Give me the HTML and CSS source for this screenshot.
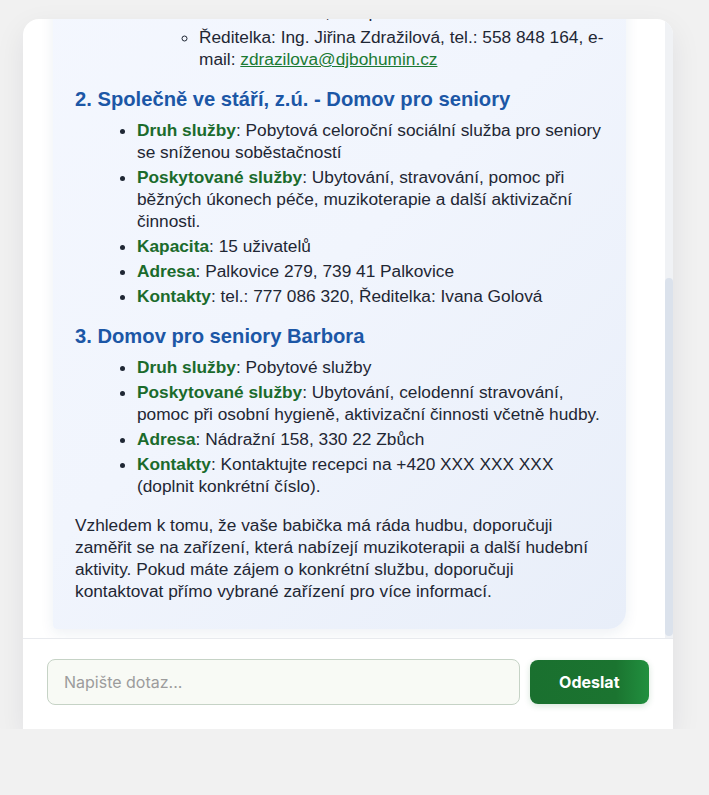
FILE: index.html
```html
<!DOCTYPE html>
<html lang="cs">
<head>
<meta charset="utf-8">
<title>Chat</title>
<link rel="stylesheet" href="styles.css">
</head>
<body>
<div class="chat">
  <div class="messages-wrap">
    <div class="messages">
      <div class="messages-inner">
        <div class="msg user">Dobrý den, hledám vhodný domov pro seniory v Moravskoslezském kraji pro svou babičku. Velmi ráda poslouchá a zpívá hudbu. Co byste doporučili?</div>
        <div class="msg bot">
          <p class="intro">Zde je několik zařízení v Moravskoslezském kraji, která poskytují pobytové služby pro seniory a mohla by vaší babičce vyhovovat:</p>
          <h3>1. Domov Jistoty Bohumín</h3>
          <ul>
            <li><strong>Druh služby</strong>: Domov pro seniory</li>
            <li><strong>Poskytované služby</strong>: Ubytování, stravování, ošetřovatelská péče, kulturní a hudební aktivity.</li>
            <li><strong>Kapacita</strong>: 120 uživatelů</li>
            <li><strong>Adresa</strong>: Alešova 1050, 735 81 Bohumín</li>
            <li><strong>Kontakty</strong>:
              <ul>
                <li>tel.: 596 092 111, recepce</li>
                <li>Ředitelka: Ing. Jiřina Zdražilová, tel.: 558 848 164, e-mail: <a href="#">zdrazilova@djbohumin.cz</a></li>
              </ul>
            </li>
          </ul>
          <h3>2. Společně ve stáří, z.ú. - Domov pro seniory</h3>
          <ul>
            <li><strong>Druh služby</strong>: Pobytová celoroční sociální služba pro seniory se sníženou soběstačností</li>
            <li><strong>Poskytované služby</strong>: Ubytování, stravování, pomoc při běžných úkonech péče, muzikoterapie a další aktivizační činnosti.</li>
            <li><strong>Kapacita</strong>: 15 uživatelů</li>
            <li><strong>Adresa</strong>: Palkovice 279, 739 41 Palkovice</li>
            <li><strong>Kontakty</strong>: tel.: 777 086 320, Ředitelka: Ivana Golová</li>
          </ul>
          <h3>3. Domov pro seniory Barbora</h3>
          <ul>
            <li><strong>Druh služby</strong>: Pobytové služby</li>
            <li><strong>Poskytované služby</strong>: Ubytování, celodenní stravování,<br>pomoc při osobní hygieně, aktivizační činnosti včetně hudby.</li>
            <li><strong>Adresa</strong>: Nádražní 158, 330 22 Zbůch</li>
            <li><strong>Kontakty</strong>: Kontaktujte recepci na +420 XXX XXX XXX<br>(doplnit konkrétní číslo).</li>
          </ul>
          <p>Vzhledem k tomu, že vaše babička má ráda hudbu, doporučuji<br>zaměřit se na zařízení, která nabízejí muzikoterapii a další hudební<br>aktivity. Pokud máte zájem o konkrétní službu, doporučuji<br>kontaktovat přímo vybrané zařízení pro více informací.</p>
        </div>
      </div>
    </div>
    <div class="scrollbar" aria-hidden="true"><div class="scrollbar-thumb"></div></div>
  </div>
  <form class="composer" onsubmit="return false">
    <input class="composer-input" type="text" placeholder="Napište dotaz...">
    <button class="composer-send" type="submit">Odeslat</button>
  </form>
</div>
</body>
</html>
```

FILE: styles.css
```css
html, body {
  margin: 0;
  padding: 0;
}

body {
  background: #f1f1f1;
  padding: 19px 0 0 23px;
  font-family: "Liberation Sans", Arial, Helvetica, sans-serif;
  color: #1f2734;
}

.chat {
  width: 650px;
  height: 710px;
  background: #ffffff;
  border-radius: 16px 16px 0 0;
  box-shadow: 0 10px 30px rgba(20, 30, 50, 0.08);
  display: flex;
  flex-direction: column;
  overflow: hidden;
}

.messages-wrap {
  position: relative;
  flex: 1;
  min-height: 0;
}

.messages {
  height: 100%;
  overflow-y: auto;
  display: flex;
  flex-direction: column-reverse;
  scrollbar-width: none;
}

.messages::-webkit-scrollbar {
  display: none;
}

.scrollbar {
  position: absolute;
  top: 0;
  right: 0;
  bottom: 0;
  width: 8px;
  background: #f0f2f5;
}

.scrollbar-thumb {
  position: absolute;
  left: 0;
  right: 0;
  bottom: 2px;
  height: 358px;
  background: #dbe2ec;
  border-radius: 4px;
}

.messages-inner {
  padding: 20px 39px 9px 30px;
  display: flex;
  flex-direction: column;
  gap: 16px;
}

.msg {
  font-size: 17.3px;
  line-height: 22px;
}

.user {
  align-self: flex-end;
  max-width: 70%;
  background: linear-gradient(135deg, #1b7430, #22913f);
  color: #ffffff;
  padding: 12px 18px;
  border-radius: 18px 18px 4px 18px;
}

.bot {
  width: 573px;
  box-sizing: border-box;
  padding: 16px 14px 10px 22px;
  background: linear-gradient(135deg, #f5f8ff 0%, #f1f5fd 55%, #e8eef9 100%);
  border-radius: 18px 18px 18px 4px;
  box-shadow: 0 4px 14px rgba(30, 60, 120, 0.08);
}

.bot p {
  margin: 17px 0;
}

.bot p.intro {
  margin-top: 0;
}

.bot h3 {
  font-size: 20.2px;
  line-height: 26px;
  font-weight: bold;
  color: #1c57a6;
  margin: 16px 0 7px;
}

.bot ul {
  margin: 0;
  padding-left: 62px;
}

.bot ul ul {
  list-style-type: circle;
  margin-top: 3px;
}

.bot li {
  margin-bottom: 3px;
}

.bot strong {
  color: #1b6b2c;
}

.bot a {
  color: #1b7a33;
  text-decoration: underline;
}

.composer {
  display: flex;
  align-items: center;
  gap: 10px;
  margin: 0;
  padding: 20px 24px 24px;
  border-top: 1px solid #e8eaee;
}

.composer-input {
  flex: 1;
  min-width: 0;
  height: 46px;
  box-sizing: border-box;
  padding: 12px 16px;
  font-family: Inter, "Noto Sans", sans-serif;
  font-size: 16px;
  line-height: 20px;
  color: #1f2734;
  background: #f8faf5;
  border: 1px solid #c6d3c6;
  border-radius: 8px;
  outline: none;
}

.composer-input::placeholder {
  color: #9c9c9c;
}

.composer-send {
  height: 44px;
  padding: 0 29.5px;
  font-family: Inter, "Noto Sans", sans-serif;
  font-size: 16px;
  font-weight: 700;
  color: #ffffff;
  background: linear-gradient(90deg, #1a702f 0%, #1b7430 72%, #21903f 100%);
  border: none;
  border-radius: 8px;
  box-shadow: 0 2px 6px rgba(27, 116, 48, 0.18);
  cursor: pointer;
}
```
